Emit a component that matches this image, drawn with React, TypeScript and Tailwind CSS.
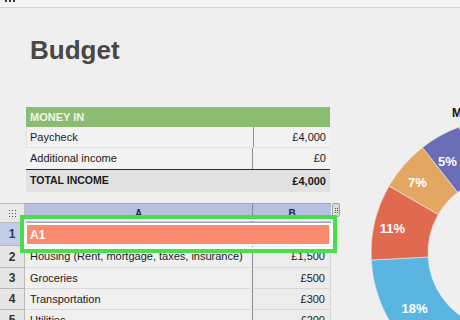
import React from "react";

const CX = 505;
const CY = 253;
const R0 = 77;
const R1 = 134;

function sector(a0: number, a1: number) {
  const p = (r: number, a: number) => {
    const t = (a * Math.PI) / 180;
    return [CX + r * Math.sin(t), CY - r * Math.cos(t)];
  };
  const large = a1 - a0 > 180 ? 1 : 0;
  const [x0, y0] = p(R1, a0);
  const [x1, y1] = p(R1, a1);
  const [x2, y2] = p(R0, a1);
  const [x3, y3] = p(R0, a0);
  return `M${x0} ${y0} A${R1} ${R1} 0 ${large} 1 ${x1} ${y1} L${x2} ${y2} A${R0} ${R0} 0 ${large} 0 ${x3} ${y3} Z`;
}

const segments = [
  { a0: 202, a1: 267, color: "#5ab5e0" },
  { a0: 267, a1: 300, color: "#e0694f" },
  { a0: 300, a1: 322, color: "#e4a763" },
  { a0: 322, a1: 340, color: "#6b6eb6" },
  { a0: 340, a1: 420, color: "#8cbd72" },
  { a0: 420, a1: 562, color: "#c9c9c9" },
];

const labels = [
  { t: "5%", x: 447.5, y: 161 },
  { t: "7%", x: 417.5, y: 182 },
  { t: "11%", x: 392.5, y: 228 },
  { t: "18%", x: 414.5, y: 308 },
];

const sheetRows = [
  { n: "2", a: "Housing (Rent, mortgage, taxes, insurance)", b: "£1,500", h: "h-[22px]" },
  { n: "3", a: "Groceries", b: "£500", h: "h-[21px]" },
  { n: "4", a: "Transportation", b: "£300", h: "h-[21px]" },
  { n: "5", a: "Utilities", b: "£200", h: "h-[21px]" },
];

function Dots() {
  return (
    <div className="grid grid-cols-3 gap-[2px]">
      {Array.from({ length: 9 }).map((_, i) => (
        <span key={i} className="block w-[1px] h-[1px] bg-[#555]" />
      ))}
    </div>
  );
}

export default function App() {
  return (
    <div className="w-[460px] h-[320px] overflow-hidden bg-[#efefef] flex flex-col font-['Liberation_Sans',Arial,sans-serif]">
      {/* top strip */}
      <div className="h-[8px] shrink-0 bg-[#f4f4f4] border-b border-[#d2d2d2] flex items-start gap-[2px] pl-[5px]">
        <span className="block w-[2px] h-[2px] bg-[#333]" />
        <span className="block w-[2px] h-[2px] bg-[#333]" />
        <span className="block w-[2px] h-[2px] bg-[#333]" />
      </div>

      <div className="flex flex-1">
        {/* left column */}
        <div className="w-[342px] shrink-0 flex flex-col">
          <h1 className="pl-[30px] mt-[29px] text-[26px] leading-[26px] font-bold text-[#474747]">Budget</h1>

          {/* Money in table */}
          <div className="ml-[26px] mt-[44px] w-[304px] text-[11px] text-[#1a1a1a]">
            <div className="h-[20px] bg-[#8cbc72] flex items-center pl-[4px] font-bold text-[#f1f6ec]">MONEY IN</div>
            <div className="h-[21px] flex bg-[#f2f2f2] border-b border-l border-[#e0e0e0]">
              <div className="w-[227px] border-r border-[#8e8e8e] flex items-center pl-[3px]">Paycheck</div>
              <div className="flex-1 flex items-center justify-end pr-[4px]">£4,000</div>
            </div>
            <div className="h-[22px] flex bg-[#f2f2f2] border-b border-[#2e2e2e]">
              <div className="w-[227px] border-r border-[#8e8e8e] flex items-center pl-[4px]">Additional income</div>
              <div className="flex-1 flex items-center justify-end pr-[4px]">£0</div>
            </div>
            <div className="h-[22px] flex bg-[#e1e1e1] font-bold">
              <div className="w-[227px] flex items-center pl-[4px] text-[10.5px]">TOTAL INCOME</div>
              <div className="flex-1 flex items-center justify-end pr-[4px]">£4,000</div>
            </div>
          </div>

          {/* spreadsheet */}
          <div className="relative mt-[11px] text-[11px] text-[#1a1a1a]">
            <div className="flex h-[20px]">
              <div className="w-[25px] bg-[#e9e9e9] border-t border-r border-b border-[#bdbdbd] flex items-center justify-center">
                <Dots />
              </div>
              <div className="w-[228px] bg-[#b5c1df] border-t border-b border-r border-t-[#9ca7c3] border-b-[#9ca7c3] border-r-[#7f8aa6] flex items-center justify-center text-[10px] font-bold text-[#1f2c52]">A</div>
              <div className="w-[78px] bg-[#b5c1df] border-t border-b border-[#9ca7c3] flex items-center justify-center text-[10px] font-bold text-[#1f2c52]">B</div>
              <div className="w-[8px] h-[14px] ml-[1px] rounded-[2px] bg-[#dcdcdc] border border-[#a2a2a2] flex items-center justify-center">
                <div className="grid grid-cols-2 gap-[1px]">
                  {Array.from({ length: 6 }).map((_, i) => (
                    <span key={i} className="block w-[1px] h-[1px] bg-[#555]" />
                  ))}
                </div>
              </div>
            </div>

            <div className="flex h-[23px]">
              <div className="w-[25px] bg-[#c2cce6] border-r border-b border-[#aeb6c8] flex items-center justify-center text-[12px] font-bold text-[#2b3a66]">1</div>
              <div className="w-[306px] bg-[#fb8a6f] border-2 border-white flex items-center pl-[3px] text-[12px] font-bold text-white">A1</div>
            </div>

            {sheetRows.map((r) => (
              <div key={r.n} className={`flex ${r.h}`}>
                <div className="w-[25px] bg-[#e6e6e6] border-r border-b border-[#b9b9b9] flex items-center justify-center text-[12px] font-bold text-[#333]">{r.n}</div>
                <div className="w-[228px] bg-[#f0f0f0] border-r border-b border-r-[#8c8c8c] border-b-[#d9d9d9] flex items-center pl-[5px] whitespace-nowrap overflow-hidden">{r.a}</div>
                <div className="w-[78px] bg-[#ececec] border-b border-r border-[#d9d9d9] flex items-center justify-end pr-[5px]">{r.b}</div>
              </div>
            ))}

            {/* selection highlight */}
            <div className="absolute left-[20px] top-[12px] w-[317px] h-[38px] border-[4px] border-[#49df49] shadow-[inset_0_0_0_2px_#ffffff]" />
          </div>
        </div>

        {/* chart column */}
        <div className="flex-1 overflow-hidden">
          <svg width="118" height="312" viewBox="342 8 118 312" className="block">
            {segments.map((s, i) => (
              <path key={i} d={sector(s.a0, s.a1)} fill={s.color} stroke="#efefef" strokeWidth="0.6" />
            ))}
            {labels.map((l) => (
              <text
                key={l.t}
                x={l.x}
                y={l.y + 4.5}
                textAnchor="middle"
                fontFamily="Liberation Sans, Arial, sans-serif"
                fontWeight="bold"
                fontSize="13"
                fill="#ffffff"
              >
                {l.t}
              </text>
            ))}
            <text x="452" y="117" fontFamily="Liberation Sans, Arial, sans-serif" fontWeight="bold" fontSize="12" fill="#111111">
              MONEY OUT
            </text>
          </svg>
        </div>
      </div>
    </div>
  );
}
